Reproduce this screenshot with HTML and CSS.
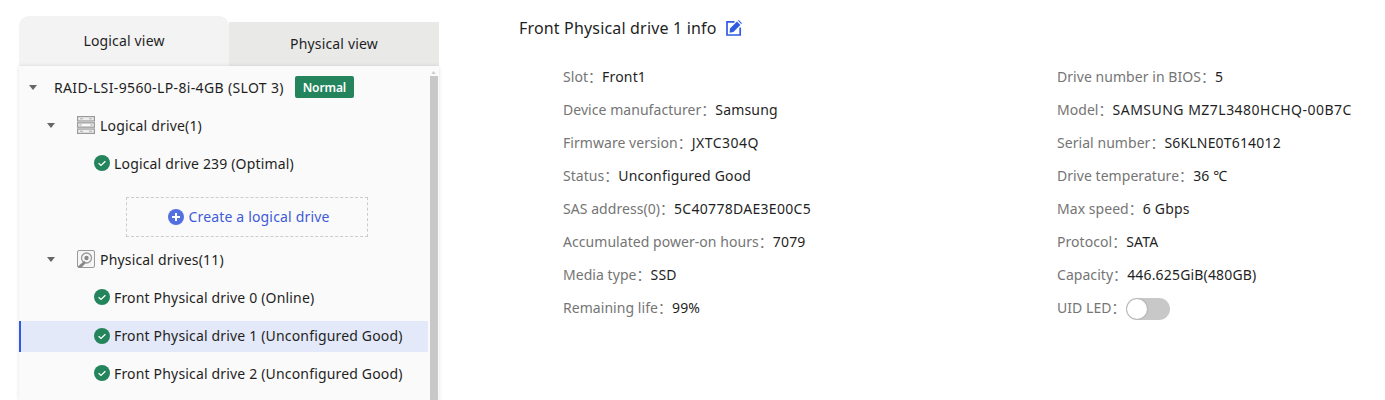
FILE: index.html
```html
<!DOCTYPE html>
<html lang="en">
<head>
<meta charset="utf-8">
<title>Drive info</title>
<link rel="stylesheet" href="styles.css">
</head>
<body>
<div class="page">
  <aside class="side">
    <div class="tabs">
      <div class="tab tab-active">Logical view</div>
      <div class="tab tab-idle">Physical view</div>
    </div>
    <div class="panel">
      <div class="tree">
        <div class="row lvl0">
          <svg class="caret" viewBox="0 0 8 5"><path d="M0 0h8L4 5z"/></svg>
          <span class="root-name">RAID-LSI-9560-LP-8i-4GB (SLOT 3)</span>
          <span class="badge">Normal</span>
        </div>
        <div class="row lvl1">
          <svg class="caret" viewBox="0 0 8 5"><path d="M0 0h8L4 5z"/></svg>
          <svg class="kind" viewBox="0 0 18 18"><g fill="#eee" stroke="#999" stroke-width="1.2"><rect x=".6" y=".6" width="16.8" height="4.4"/><rect x=".6" y="6.8" width="16.8" height="4.4"/><rect x=".6" y="13" width="16.8" height="4.4"/></g><path d="M5 8.3h8v1.4H5z" fill="#fff"/><path d="M3 2.8h3M12 2.8h3M3 15.2h3M12 15.2h3M2.5 9h2M13.5 9h2" stroke="#aaa"/></svg>
          <span class="kind-name">Logical drive(1)</span>
        </div>
        <div class="row lvl2">
          <svg class="ok" viewBox="0 0 16 16"><circle cx="8" cy="8" r="8"/><path d="M4.6 8.2l2.4 2.2 4.4-4.2"/></svg>
          <span>Logical drive 239 (Optimal)</span>
        </div>
        <div class="create-wrap">
          <div class="create">
            <svg class="plus" viewBox="0 0 16 16"><circle cx="8" cy="8" r="8"/><path d="M8 4v8M4 8h8"/></svg>
            <span>Create a logical drive</span>
          </div>
        </div>
        <div class="row lvl1">
          <svg class="caret" viewBox="0 0 8 5"><path d="M0 0h8L4 5z"/></svg>
          <svg class="kind" viewBox="0 0 18 18"><rect x=".5" y=".5" width="17" height="17" rx="1.5" fill="#f6f6f6" stroke="#999"/><circle cx="9.5" cy="8" r="5" fill="none" stroke="#999" stroke-width="1.3"/><circle cx="9.5" cy="8" r="2.2" fill="#888"/><path d="M.8 16.6l6.4-5.6 1.8 1.8-4.4 4.6H1.5z" fill="#888"/></svg>
          <span class="kind-name">Physical drives(11)</span>
        </div>
        <div class="row lvl2">
          <svg class="ok" viewBox="0 0 16 16"><circle cx="8" cy="8" r="8"/><path d="M4.6 8.2l2.4 2.2 4.4-4.2"/></svg>
          <span>Front Physical drive 0 (Online)</span>
        </div>
        <div class="row lvl2 selected">
          <svg class="ok" viewBox="0 0 16 16"><circle cx="8" cy="8" r="8"/><path d="M4.6 8.2l2.4 2.2 4.4-4.2"/></svg>
          <span>Front Physical drive 1 (Unconfigured Good)</span>
        </div>
        <div class="row lvl2">
          <svg class="ok" viewBox="0 0 16 16"><circle cx="8" cy="8" r="8"/><path d="M4.6 8.2l2.4 2.2 4.4-4.2"/></svg>
          <span>Front Physical drive 2 (Unconfigured Good)</span>
        </div>
      </div>
      <div class="scroll">
        <svg class="scroll-up" viewBox="0 0 6 4"><path d="M0 4h6L3 0z"/></svg>
        <div class="scroll-thumb"></div>
      </div>
    </div>
  </aside>
  <main class="main">
    <h1 class="title">
      <span>Front Physical drive 1 info</span>
      <svg class="edit" viewBox="0 0 16 16"><path d="M8.5 1.8H1v13.2h13.2V7.5" fill="none" stroke="#2f5be0" stroke-width="1.7"/><path d="M4 8.6L11 1.6l3.4 3.4-7 7-3.8.8z" fill="#2f5be0"/><path d="M12 .8l.8-.8 3.2 3.2-.8.8z" fill="#2f5be0"/></svg>
    </h1>
    <div class="fields">
      <div class="field"><span class="k">Slot：</span><span class="v">Front1</span></div>
      <div class="field"><span class="k">Drive number in BIOS：</span><span class="v">5</span></div>
      <div class="field"><span class="k">Device manufacturer：</span><span class="v">Samsung</span></div>
      <div class="field"><span class="k">Model：</span><span class="v caps">SAMSUNG MZ7L3480HCHQ-00B7C</span></div>
      <div class="field"><span class="k">Firmware version：</span><span class="v caps">JXTC304Q</span></div>
      <div class="field"><span class="k">Serial number：</span><span class="v">S6KLNE0T614012</span></div>
      <div class="field"><span class="k">Status：</span><span class="v">Unconfigured Good</span></div>
      <div class="field"><span class="k">Drive temperature：</span><span class="v">36 ℃</span></div>
      <div class="field"><span class="k">SAS address(0)：</span><span class="v hex">5C40778DAE3E00C5</span></div>
      <div class="field"><span class="k">Max speed：</span><span class="v">6 Gbps</span></div>
      <div class="field"><span class="k">Accumulated power-on hours：</span><span class="v">7079</span></div>
      <div class="field"><span class="k">Protocol：</span><span class="v">SATA</span></div>
      <div class="field"><span class="k">Media type：</span><span class="v">SSD</span></div>
      <div class="field"><span class="k">Capacity：</span><span class="v">446.625GiB(480GB)</span></div>
      <div class="field"><span class="k">Remaining life：</span><span class="v">99%</span></div>
      <div class="field"><span class="k">UID LED：</span><span class="switch"><span class="knob"></span></span></div>
    </div>
  </main>
</div>
</body>
</html>
```
FILE: styles.css
```css
* { box-sizing: border-box; }
html, body { margin: 0; height: 400px; overflow: hidden; background: #fff; }
body { font-family: "Noto Sans", "Noto Sans CJK SC", sans-serif; font-size: 14px; letter-spacing: .17px; color: #1f1f1f; }
.page { display: flex; height: 400px; padding: 16px 0 0 19px; }
.side { width: 420px; flex: none; display: flex; flex-direction: column; }
.tabs { display: flex; align-items: flex-end; height: 50px; flex: none; }
.tab { width: 210px; display: flex; align-items: center; justify-content: center; }
.tab-active { height: 50px; background: #f3f3f3; border-radius: 10px 10px 0 0; padding-bottom: 1px; }
.tab-idle { height: 44px; background: #e9e9e8; padding-bottom: 2px; }
.panel { flex: 1; display: flex; background: #fafafa; box-shadow: 0 0 4px rgba(0,0,0,.12); min-height: 0; overflow: hidden; }
.tree { width: 409px; flex: none; padding-top: 2px; }
.row { display: flex; align-items: center; height: 38px; white-space: nowrap; }
.lvl0 { padding-left: 10px; }
.lvl1 { padding-left: 28px; }
.lvl2 { padding-left: 75px; }
.selected { height: 31px; margin: 5px 0 2px; background: #e3e9f8; border-left: 2px solid #2f5be0; padding-left: 73px; padding-bottom: 2px; }
.caret { width: 8px; height: 5px; fill: #666; flex: none; }
.root-name { margin-left: 17px; letter-spacing: .36px; }
.badge { margin-left: 11px; width: 59px; height: 22px; text-align: center; background: #24845b; color: #fff; border-radius: 2px; font-size: 12px; font-weight: 600; letter-spacing: -.1px; line-height: 23px; }
.kind { width: 18px; height: 18px; margin-left: 22px; flex: none; }
.kind-name { margin-left: 5px; }
.ok { width: 16px; height: 16px; margin-right: 4px; flex: none; }
.ok circle { fill: #24845b; }
.ok path { fill: none; stroke: #fff; stroke-width: 1.3; }
.create-wrap { padding: 15px 0 3px 107px; }
.create { width: 242px; height: 40px; border: 1px dashed #ccc; display: flex; align-items: center; justify-content: center; color: #3f5bd8; gap: 4px; padding: 0 0 1px 4px; }
.plus { width: 16px; height: 16px; flex: none; }
.plus circle { fill: #5470e0; }
.plus path { stroke: #fff; stroke-width: 2; }
.scroll { width: 11px; flex: none; display: flex; flex-direction: column; align-items: center; padding: 5px 0 0 0; margin-left: 0; }
.scroll-up { width: 5px; height: 3px; fill: #ccc; flex: none; }
.scroll-thumb { width: 8px; flex: 1; background: #c8c8c8; margin-top: 2px; }
.main { flex: 1; padding: 0 0 0 80px; }
.title { margin: 0; display: flex; align-items: center; gap: 9px; height: 24px; font-size: 16px; font-weight: 400; color: #1f1f1f; }
.edit { width: 16px; height: 16px; flex: none; }
.fields { display: grid; grid-template-columns: 494px auto; grid-auto-rows: 33px; padding: 20px 0 0 44px; }
.field { display: flex; align-items: baseline; white-space: nowrap; height: 33px; line-height: 33px; }
.k { color: #757575; letter-spacing: .05px; }
.v { color: #1f1f1f; }
.caps { letter-spacing: .48px; }
.hex { letter-spacing: .3px; }
.switch { align-self: center; margin-top: 3px; width: 44px; height: 22px; border-radius: 11px; background: #c8c8c8; display: flex; align-items: center; padding-left: 1px; }
.knob { width: 20px; height: 20px; border-radius: 50%; background: #fff; box-shadow: 0 0 2px rgba(0,0,0,.3); }
```
